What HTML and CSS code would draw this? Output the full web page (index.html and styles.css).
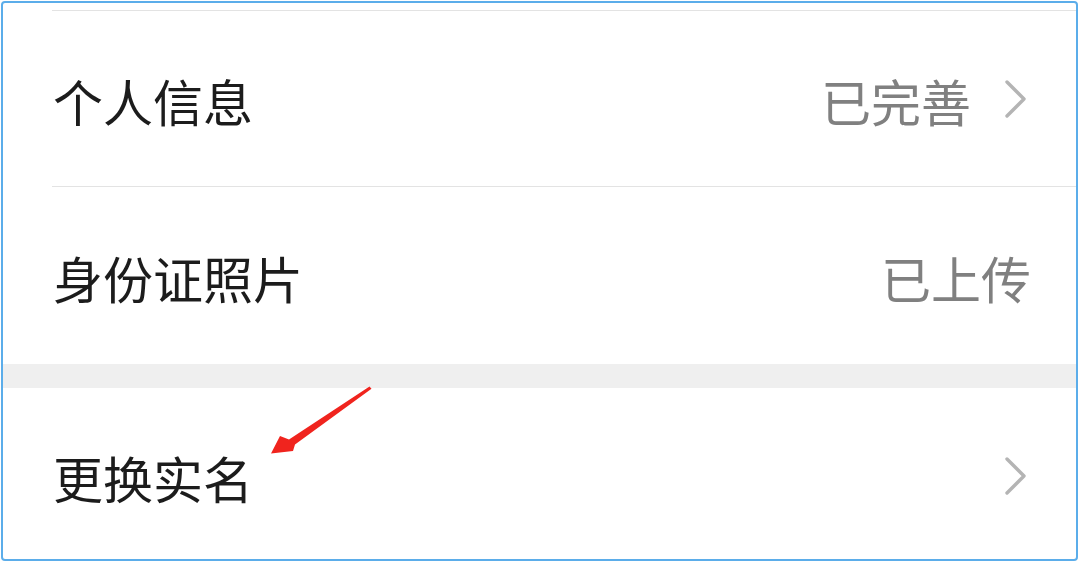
FILE: index.html
```html
<!DOCTYPE html>
<html lang="zh-CN">
<head>
<meta charset="utf-8">
<link rel="stylesheet" href="styles.css">
</head>
<body>
<div class="frame">
  <div class="spacer"></div>
  <div class="divider"></div>
  <div class="row row-1">
    <span class="label">个人信息</span>
    <span class="right">
      <span class="value">已完善</span>
      <svg class="chev" width="24" height="40" viewBox="0 0 24 40"><path d="M3 3 L20 20 L3 37" fill="none" stroke="#b4b4b4" stroke-width="3.4" stroke-linecap="round" stroke-linejoin="round"/></svg>
    </span>
  </div>
  <div class="divider"></div>
  <div class="row row-2">
    <span class="label">身份证照片</span>
    <span class="right">
      <span class="value value-last">已上传</span>
    </span>
  </div>
  <div class="band"></div>
  <div class="row row-3">
    <span class="label">更换实名</span>
    <span class="right">
      <svg class="chev" width="24" height="40" viewBox="0 0 24 40"><path d="M3 3 L20 20 L3 37" fill="none" stroke="#b4b4b4" stroke-width="3.4" stroke-linecap="round" stroke-linejoin="round"/></svg>
    </span>
  </div>
  <svg class="arrow" width="120" height="80" viewBox="0 0 120 80">
    <polygon points="105.5,1.5 107.5,3.8 31,59.5 29,66 7,68.5 16,51 25,54.5" fill="#f0241e"/>
  </svg>
</div>
</body>
</html>
```

FILE: styles.css
```css
html, body {
  margin: 0;
  padding: 0;
  background: #ffffff;
}
.frame {
  position: relative;
  box-sizing: border-box;
  margin: 1px 0 0 1px;
  width: 1077px;
  height: 560px;
  border: 2px solid #5badea;
  border-radius: 4px;
  background: #ffffff;
  display: flex;
  flex-direction: column;
  overflow: hidden;
  font-family: "Noto Sans CJK SC", "Noto Sans", sans-serif;
}
.spacer {
  height: 7px;
}
.divider {
  height: 1px;
  margin-left: 49px;
  background: #e3e3e3;
}
.row {
  display: flex;
  align-items: center;
  justify-content: space-between;
  padding: 0 48px 0 50px;
  box-sizing: border-box;
}
.row-1 { height: 175px; padding-top: 3px; }
.row-2 { height: 177px; padding-top: 3px; }
.row-3 { height: 171px; padding-top: 7px; }
.label {
  font-size: 50px;
  line-height: 1;
  color: #1c1c1c;
}
.right {
  display: flex;
  align-items: center;
}
.value {
  font-size: 50px;
  line-height: 1;
  color: #808080;
  margin-right: 33px;
}
.value-last {
  margin-right: -3px;
}
.chev {
  display: block;
  margin-top: -2px;
}
.band {
  height: 24px;
  background: #efefef;
}
.arrow {
  position: absolute;
  left: 261px;
  top: 382px;
}
```
